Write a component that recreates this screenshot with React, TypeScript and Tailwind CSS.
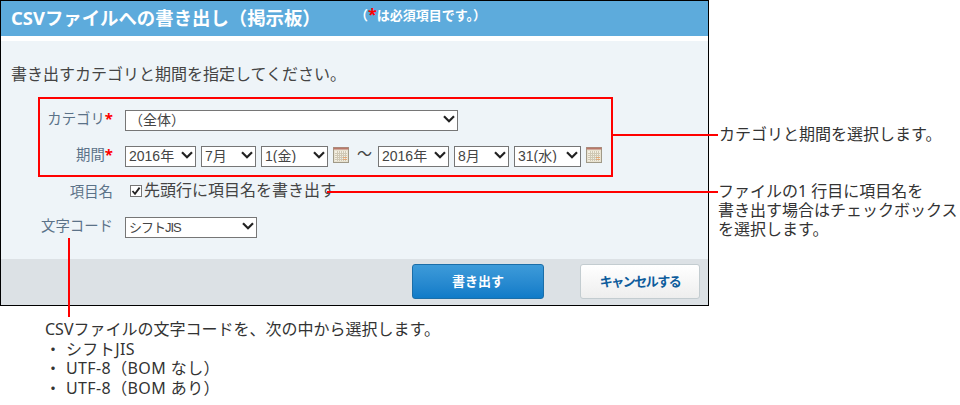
const jp = "font-['Noto_Sans','Noto_Sans_CJK_JP',sans-serif]"

function CalendarIcon() {
  return (
    <svg width="16" height="16" viewBox="0 0 16 16" className="mb-[1px] shrink-0 self-end">
      <rect x="0.5" y="0.5" width="15" height="15" fill="#e8e2d0" stroke="#a09a88" strokeWidth="1" />
      <rect x="0.5" y="0.5" width="15" height="2" fill="#b9776a" />
      <rect x="2" y="4" width="12" height="10" fill="#f3efe2" />
      <path
        d="M2 6.5h12M2 8.5h12M2 10.5h12M2 12.5h12M4.5 4v10M6.5 4v10M8.5 4v10M10.5 4v10M12.5 4v10"
        stroke="#cfc8b4"
        strokeWidth="1"
        fill="none"
      />
      <path d="M10 10.5h4M10 12.5h4" stroke="#e2a878" strokeWidth="1" fill="none" />
    </svg>
  )
}

function Select({ value, className, textClass }: { value: string; className: string; textClass?: string }) {
  return (
    <div className={`relative h-[21px] shrink-0 ${className}`}>
      <select
        defaultValue={value}
        className={`h-full w-full appearance-none rounded-none border border-[#767676] bg-white pl-[3px] font-['Liberation_Sans','Noto_Sans_CJK_JP',sans-serif] leading-none text-[#444] ${textClass ?? "text-[14px]"}`}
      >
        <option>{value}</option>
      </select>
      <svg width="12" height="8" viewBox="0 0 12 8" className="pointer-events-none absolute top-[8px] right-[3px]">
        <path d="M1 1.2 6 6.2 11 1.2" fill="none" stroke="#222" strokeWidth="2.2" />
      </svg>
    </div>
  )
}

function Label({ text, required }: { text: string; required?: boolean }) {
  return (
    <div className="w-[112px] shrink-0 pt-[2px] text-right text-[14.4px] leading-[18px] text-[#5b7288]">
      {text}
      {required && <span className="text-[15px] font-bold text-[#ff0000]">*</span>}
    </div>
  )
}

export default function App() {
  return (
    <div className={`relative h-[405px] w-[960px] overflow-hidden bg-white ${jp}`}>
      <div className="flex h-[306px] w-[709px] flex-col border border-black bg-[#eef4f8]">
        <div className="flex h-[35px] shrink-0 items-center bg-[#5dabdc] pl-[10px] text-white">
          <h1 className="-mt-[2px] w-[344px] text-[18.4px] font-bold">CSVファイルへの書き出し（掲示板）</h1>
          <span className="-mt-[10px] text-[13px] font-bold">
            （<span className="text-[16px] text-[#ff0000]">*</span>は必須項目です。）
          </span>
        </div>
        <div className="h-[5px] shrink-0 bg-white" />
        <div className="flex flex-1 flex-col pt-[22px]">
          <p className="pl-[10px] text-[16px] leading-[22px] text-[#444]">
            書き出すカテゴリと期間を指定してください。
          </p>
          <div className="mt-[22px] flex items-center gap-[12px]">
            <Label text="カテゴリ" required />
            <Select value="（全体）" className="w-[333px]" />
          </div>
          <div className="mt-[15px] flex items-center gap-[12px]">
            <Label text="期間" required />
            <div className="flex items-center gap-[5px]">
              <Select value="2016年" className="w-[71px]" />
              <Select value="7月" className="w-[55px]" />
              <Select value="1(金)" className="w-[67px]" />
              <CalendarIcon />
              <span className="mr-[1px] ml-[3px] w-[15px] text-[15px] leading-none text-[#444]">〜</span>
              <Select value="2016年" className="w-[71px]" />
              <Select value="8月" className="w-[55px]" />
              <Select value="31(水)" className="w-[67px]" />
              <CalendarIcon />
            </div>
          </div>
          <div className="mt-[16px] flex items-center">
            <Label text="項目名" />
            <label className="ml-[17px] flex items-center gap-[2px] text-[16px] leading-[21px] text-[#444]">
              <span className="flex h-[12px] w-[12px] items-center justify-center border border-[#767676] bg-white">
                <svg width="10" height="10" viewBox="0 0 10 10">
                  <path d="M1.5 5 4 7.8 8.6 1.6" fill="none" stroke="#222" strokeWidth="1.8" />
                </svg>
              </span>
              先頭行に項目名を書き出す
            </label>
          </div>
          <div className="mt-[13px] flex items-center gap-[12px]">
            <Label text="文字コード" />
            <Select value="シフトJIS" className="w-[132px]" textClass="text-[13px] tracking-[-1px]" />
          </div>
        </div>
        <div className="flex h-[46px] shrink-0 justify-end gap-[36px] bg-[#dce1e5] pt-[5px] pr-[8px]">
          <button className="h-[35px] w-[132px] rounded-[3px] border border-[#1b6ea8] bg-gradient-to-b from-[#3d9bd9] to-[#0f7bc8] text-[13px] font-bold text-white">
            書き出す
          </button>
          <button className="h-[35px] w-[120px] rounded-[3px] border border-[#c3ccd0] bg-gradient-to-b from-white to-[#eeeeee] text-[13px] font-bold tracking-[-1.5px] text-[#0d5c9c]">
            キャンセルする
          </button>
        </div>
      </div>

      {/* red callouts over the form */}
      <div className="absolute top-[97px] left-[38px] h-[80px] w-[575px] border-2 border-[#ff0000]" />
      <div className="absolute top-[134px] left-[613px] h-[2px] w-[105px] bg-[#ff0000]" />
      <div className="absolute top-[191px] left-[327px] h-[2px] w-[391px] bg-[#ff0000]" />
      <div className="absolute top-[238px] left-[68px] h-[79px] w-[2px] bg-[#ff0000]" />

      <div className="absolute top-[124px] left-[719px] text-[16px] leading-[21px] text-[#333]">
        カテゴリと期間を選択します。
      </div>
      <div className="absolute top-[182px] left-[718px] w-[242px] text-[16px] leading-[19px] text-[#333]">
        <div>ファイルの1 行目に項目名を</div>
        <div>書き出す場合はチェックボックス</div>
        <div>を選択します。</div>
      </div>
      <div className="absolute top-[320px] left-[45px] text-[16px] leading-[19.5px] text-[#333]">
        <div>CSVファイルの文字コードを、次の中から選択します。</div>
        <div className="tracking-[0.4px]">・ シフトJIS</div>
        <div className="tracking-[0.4px]">・ UTF-8（BOM なし）</div>
        <div className="tracking-[0.4px]">・ UTF-8（BOM あり）</div>
      </div>
    </div>
  )
}
